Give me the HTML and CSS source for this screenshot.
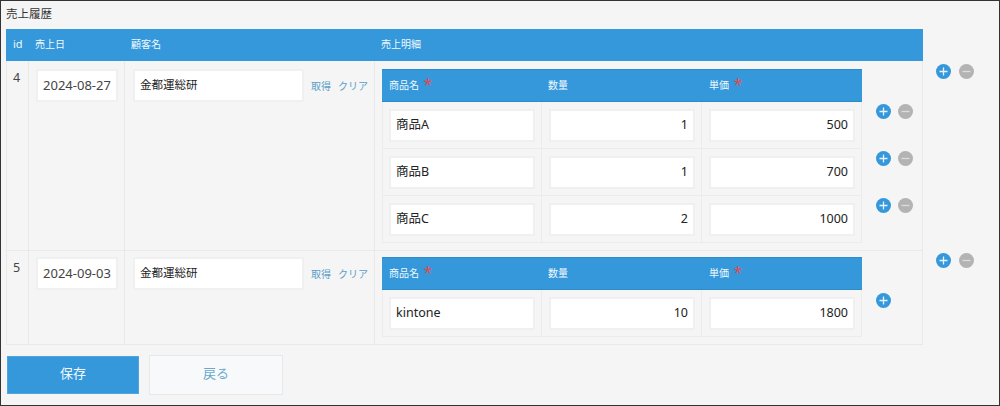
FILE: index.html
```html
<!DOCTYPE html>
<html lang="ja">
<head>
<meta charset="utf-8">
<title>売上履歴</title>
<link rel="stylesheet" href="styles.css">
</head>
<body>
<main class="frame">
  <div class="title">売上履歴</div>
  <table class="main">
    <thead>
      <tr>
        <th class="c-id">id</th>
        <th class="c-date">売上日</th>
        <th class="c-cust">顧客名</th>
        <th class="c-detail">売上明細</th>
        <th class="c-act blank"></th>
      </tr>
    </thead>
    <tbody>
      <tr class="first">
        <td class="idn">4</td>
        <td class="pad"><div class="field date">2024-08-27</div></td>
        <td class="pad cust-cell"><div class="cust"><div class="field name">金都運総研</div><a class="link">取得</a><a class="link">クリア</a></div></td>
        <td class="pad">
          <table class="sub">
            <thead><tr><th class="s1">商品名 <span class="req">*</span></th><th class="s2">数量</th><th class="s3">単価 <span class="req">*</span></th><th class="blank"></th></tr></thead>
            <tbody>
              <tr><td class="s1"><div class="field">商品A</div></td><td class="s2"><div class="field num">1</div></td><td class="s3"><div class="field num">500</div></td>
                <td class="act"><div class="btns"><svg class="ic" viewBox="0 0 15 15"><circle class="plus" cx="7.5" cy="7.5" r="7.5"/><path class="mark" d="M3.5 7.5h8M7.5 3.5v8"/></svg><svg class="ic" viewBox="0 0 15 15"><circle class="minus" cx="7.5" cy="7.5" r="7.5"/><path class="mark-m" d="M3.5 7.5h8"/></svg></div></td></tr>
              <tr><td class="s1"><div class="field">商品B</div></td><td class="s2"><div class="field num">1</div></td><td class="s3"><div class="field num">700</div></td>
                <td class="act"><div class="btns"><svg class="ic" viewBox="0 0 15 15"><circle class="plus" cx="7.5" cy="7.5" r="7.5"/><path class="mark" d="M3.5 7.5h8M7.5 3.5v8"/></svg><svg class="ic" viewBox="0 0 15 15"><circle class="minus" cx="7.5" cy="7.5" r="7.5"/><path class="mark-m" d="M3.5 7.5h8"/></svg></div></td></tr>
              <tr><td class="s1"><div class="field">商品C</div></td><td class="s2"><div class="field num">2</div></td><td class="s3"><div class="field num">1000</div></td>
                <td class="act"><div class="btns"><svg class="ic" viewBox="0 0 15 15"><circle class="plus" cx="7.5" cy="7.5" r="7.5"/><path class="mark" d="M3.5 7.5h8M7.5 3.5v8"/></svg><svg class="ic" viewBox="0 0 15 15"><circle class="minus" cx="7.5" cy="7.5" r="7.5"/><path class="mark-m" d="M3.5 7.5h8"/></svg></div></td></tr>
            </tbody>
          </table>
        </td>
        <td class="outer-act"><div class="btns wide"><svg class="ic" viewBox="0 0 15 15"><circle class="plus" cx="7.5" cy="7.5" r="7.5"/><path class="mark" d="M3.5 7.5h8M7.5 3.5v8"/></svg><svg class="ic" viewBox="0 0 15 15"><circle class="minus" cx="7.5" cy="7.5" r="7.5"/><path class="mark-m" d="M3.5 7.5h8"/></svg></div></td>
      </tr>
      <tr class="second">
        <td class="idn">5</td>
        <td class="pad"><div class="field date">2024-09-03</div></td>
        <td class="pad cust-cell"><div class="cust"><div class="field name">金都運総研</div><a class="link">取得</a><a class="link">クリア</a></div></td>
        <td class="pad">
          <table class="sub">
            <thead><tr><th class="s1">商品名 <span class="req">*</span></th><th class="s2">数量</th><th class="s3">単価 <span class="req">*</span></th><th class="blank"></th></tr></thead>
            <tbody>
              <tr><td class="s1"><div class="field">kintone</div></td><td class="s2"><div class="field num">10</div></td><td class="s3"><div class="field num">1800</div></td>
                <td class="act"><div class="btns"><svg class="ic" viewBox="0 0 15 15"><circle class="plus" cx="7.5" cy="7.5" r="7.5"/><path class="mark" d="M3.5 7.5h8M7.5 3.5v8"/></svg></div></td></tr>
            </tbody>
          </table>
        </td>
        <td class="outer-act"><div class="btns wide"><svg class="ic" viewBox="0 0 15 15"><circle class="plus" cx="7.5" cy="7.5" r="7.5"/><path class="mark" d="M3.5 7.5h8M7.5 3.5v8"/></svg><svg class="ic" viewBox="0 0 15 15"><circle class="minus" cx="7.5" cy="7.5" r="7.5"/><path class="mark-m" d="M3.5 7.5h8"/></svg></div></td>
      </tr>
    </tbody>
  </table>
  <div class="actions">
    <button class="btn save">保存</button>
    <button class="btn back">戻る</button>
  </div>
</main>
</body>
</html>
```
FILE: styles.css
```css
* { box-sizing: border-box; }
html, body { margin: 0; padding: 0; }
body {
  width: 1000px;
  height: 406px;
  overflow: hidden;
  background: #f5f5f5;
  font-family: "Noto Sans", "Noto Sans CJK JP", sans-serif;
  color: #333;
}
.frame {
  width: 1000px;
  height: 406px;
  border: 1px solid #333;
  padding-left: 5px;
  background: #f5f5f5;
}
.title {
  height: 28px;
  line-height: 26px;
  font-size: 11.5px;
  color: #333;
}
table { border-collapse: separate; border-spacing: 0; table-layout: fixed; }
.main { width: 994px; }
.main > thead > tr > th {
  height: 32px;
  padding: 0 0 3px 6px;
  text-align: left;
  font-weight: 400;
  font-size: 10px;
  background: #3498db;
  color: #f2f9fd;
}
.main > thead > tr > th.c-id { padding-left: 7px; font-size: 11px; }
.main > thead > tr > th.blank { background: transparent; }
.c-id { width: 23px; }
.c-date { width: 96px; }
.c-cust { width: 250px; }
.c-detail { width: 548px; }
.c-act { width: 77px; }

.main > tbody > tr > td {
  vertical-align: top;
  border-right: 1px solid #e9e9e9;
  border-bottom: 1px solid #e9e9e9;
}
.main > tbody > tr > td:first-child { border-left: 1px solid #e9e9e9; }
.main > tbody > tr > td.outer-act { border: 0; padding-left: 13px; }
.first > td { height: 190px; padding-top: 8px; }
.second > td { height: 94px; padding-top: 7px; }
.main > tbody > tr > td.pad { padding-left: 7px; padding-right: 0; }
.main > tbody > tr > td.cust-cell { padding-left: 8px; }
.main > tbody > tr.second > td.pad { padding-top: 6px; }
.main > tbody > tr > td.idn { padding: 8px 0 0 6px; font-size: 12.5px; color: #444; }
.first > td.outer-act { padding-top: 3px; }
.second > td.outer-act { padding-top: 2px; }

.field {
  height: 33px;
  line-height: 28px;
  padding: 0 5px;
  background: #fff;
  border: 2px solid #f0f0f0;
  font-size: 12px;
  color: #222;
  white-space: nowrap;
}
.date {
  width: 82px;
  font-size: 13px;
  color: #444;
  text-align: center;
  padding: 0;
}
.cust { display: flex; align-items: center; gap: 7px; }
.name { flex: none; width: 171px; border-radius: 2px; font-size: 11.5px; }
.link { flex: none; white-space: nowrap; font-size: 10px; color: #5a9fc9; }

.sub { width: 540px; }
.sub th {
  height: 33px;
  padding: 0 0 3px 7px;
  font-size: 10px;
  font-weight: 400;
  text-align: left;
  background: #3498db;
  color: #f2f9fd;
  border-top: 1px solid #2d8bc9;
  border-bottom: 1px solid #2d8bc9;
}
.sub th.s2 { padding-left: 6px; }
.sub th.blank { background: transparent; border: 0; }
.sub .s1, .sub .s2, .sub .s3 { width: 160px; }
.sub > thead > tr > th:last-child { width: 60px; }
.sub td {
  height: 47px;
  padding: 7px 6px 6px 7px;
  vertical-align: top;
  border-right: 1px solid #ececec;
  border-bottom: 1px solid #ececec;
}
.sub td.s1 { border-left: 1px solid #ececec; padding-left: 6px; }
.sub td.act { border: 0; padding: 2px 0 0 14px; }
.second .sub td.act { padding-top: 3px; }
.sub tbody .field { width: 146px; font-size: 12.5px; }
.num { text-align: right; }
.req {
  color: #e5484d;
  font-size: 16px;
  line-height: 0;
  position: relative;
  top: 1px;
  left: 2px;
}
.btns { display: flex; gap: 7px; }
.btns.wide { gap: 8px; }
.ic { width: 15px; height: 15px; display: block; }
.plus { fill: #3498db; }
.minus { fill: #b3b3b3; }
.mark { stroke: #e6f3fb; stroke-width: 1.3; fill: none; }
.mark-m { stroke: #dcdcdc; stroke-width: 1.3; fill: none; }

.actions {
  display: flex;
  align-items: center;
  gap: 10px;
  margin-top: 10px;
  padding-left: 1px;
}
.btn {
  font-family: inherit;
  font-size: 13px;
  padding: 0 0 5px;
  cursor: pointer;
}
.save {
  width: 132px;
  height: 38px;
  background: #3498db;
  color: #f2f9fd;
  border: 1px solid #4da6de;
}
.back {
  width: 134px;
  height: 40px;
  background: #f8f9fa;
  color: #6aa9cf;
  border: 1px solid #e6e8ea;
}
```
